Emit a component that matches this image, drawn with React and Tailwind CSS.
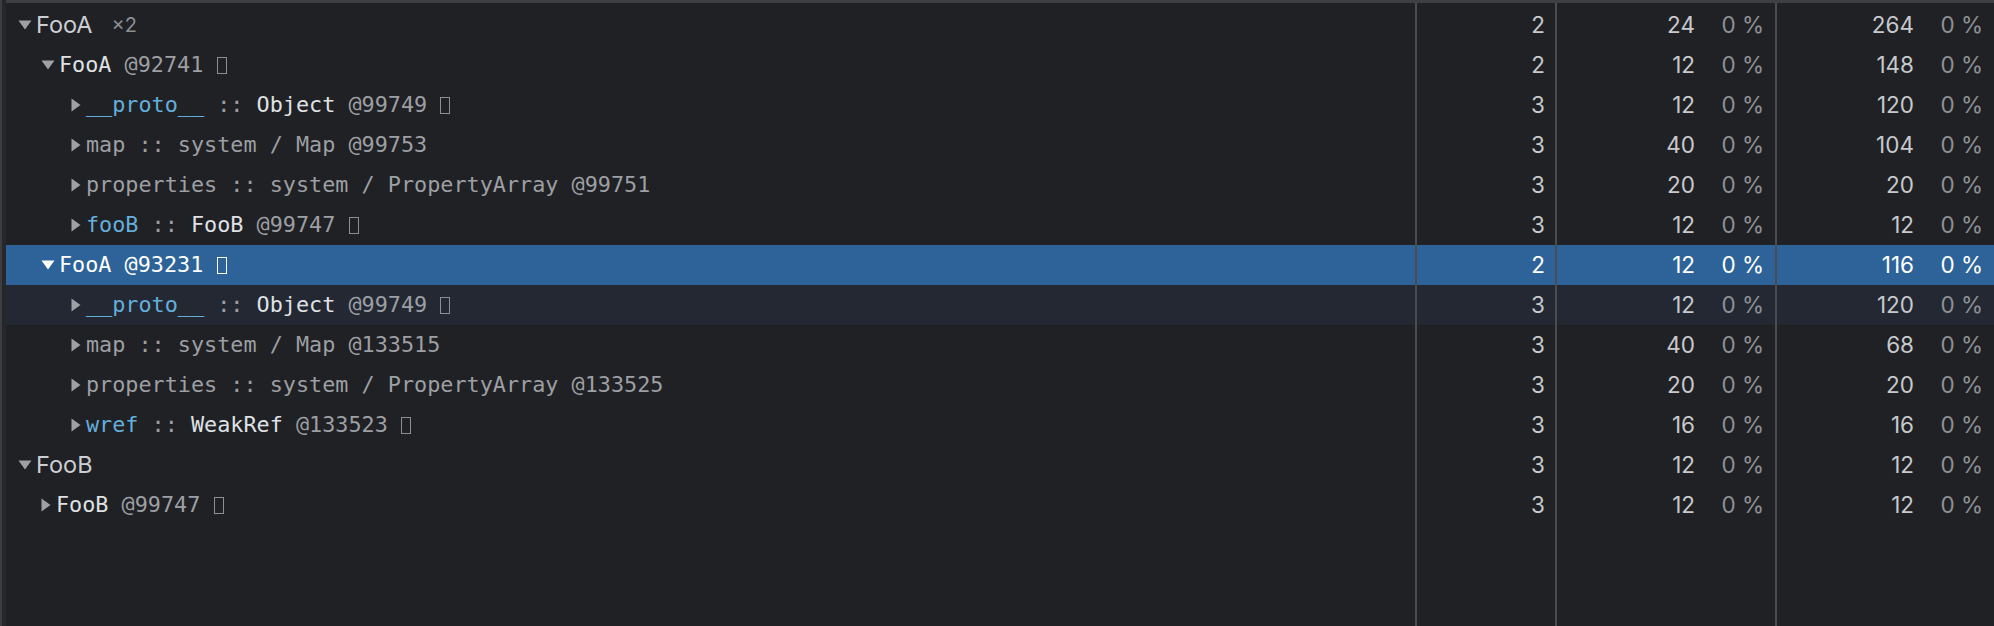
import React from "react";

const MONO = { fontFamily: '"DejaVu Sans Mono", "Liberation Mono", monospace' };

const rows = [
  { lvl: 0, open: true, cls: "FooA", mult: "×2", d: "2", s: "24", r: "264" },
  { lvl: 1, open: true, parts: [["FooA", "w"], [" @92741", "g"]], box: true, d: "2", s: "12", r: "148" },
  { lvl: 2, parts: [["__proto__", "b"], [" :: ", "g"], ["Object", "w"], [" @99749", "g"]], box: true, d: "3", s: "12", r: "120" },
  { lvl: 2, parts: [["map :: system / Map @99753", "g"]], d: "3", s: "40", r: "104" },
  { lvl: 2, parts: [["properties :: system / PropertyArray @99751", "g"]], d: "3", s: "20", r: "20" },
  { lvl: 2, parts: [["fooB", "b"], [" :: ", "g"], ["FooB", "w"], [" @99747", "g"]], box: true, d: "3", s: "12", r: "12" },
  { lvl: 1, open: true, selected: true, parts: [["FooA", "w"], [" @93231", "w"]], box: true, d: "2", s: "12", r: "116" },
  { lvl: 2, hover: true, parts: [["__proto__", "b"], [" :: ", "g"], ["Object", "w"], [" @99749", "g"]], box: true, d: "3", s: "12", r: "120" },
  { lvl: 2, parts: [["map :: system / Map @133515", "g"]], d: "3", s: "40", r: "68" },
  { lvl: 2, parts: [["properties :: system / PropertyArray @133525", "g"]], d: "3", s: "20", r: "20" },
  { lvl: 2, parts: [["wref", "b"], [" :: ", "g"], ["WeakRef", "w"], [" @133523", "g"]], box: true, d: "3", s: "16", r: "16" },
  { lvl: 0, open: true, cls: "FooB", d: "3", s: "12", r: "12" },
  { lvl: 1, parts: [["FooB", "w"], [" @99747", "g"]], box: true, d: "3", s: "12", r: "12" },
];

const indent = ["pl-[12px]", "pl-[35px]", "pl-[65px]"];

const partColor = {
  w: "text-[#dfe1e4]",
  g: "text-[#9c9fa3]",
  b: "text-[#64aedc]",
};

function Arrow({ open, color }) {
  if (open) {
    return (
      <svg width="14" height="10" viewBox="0 0 14 10" className="mr-[4px] shrink-0">
        <polygon points="0.5,0.5 13.5,0.5 7,9.5" fill={color} />
      </svg>
    );
  }
  return (
    <svg width="10" height="14" viewBox="0 0 10 14" className="mr-[5px] shrink-0">
      <polygon points="0.5,0.5 9.5,7 0.5,13.5" fill={color} />
    </svg>
  );
}

function Row({ row }) {
  const sel = row.selected;
  const bg = sel ? "bg-[#2d6398]" : row.hover ? "bg-[#242833]" : "";
  const num = sel ? "text-white" : "text-[#c6c9cd]";
  const pct = sel ? "text-white" : "text-[#8d9094]";
  return (
    <div className={`grid h-[40px] grid-cols-[1fr_140px_220px_219px] ${bg}`}>
      <div className={`flex items-center whitespace-pre ${indent[row.lvl]}`}>
        <Arrow open={row.open} color={sel ? "#ffffff" : "#9da0a4"} />
        {row.cls ? (
          <>
            <span className="font-['Inter'] text-[23.5px] text-[#cbced2]">{row.cls}</span>
            {row.mult && (
              <span className="ml-[19px] font-['Inter'] text-[20px] text-[#8b8e92]">{row.mult}</span>
            )}
          </>
        ) : (
          <span style={MONO} className="flex items-center text-[21.8px]">
            {row.parts.map(([t, c], i) => (
              <span key={i} className={sel ? "text-white" : partColor[c]}>
                {t}
              </span>
            ))}
            {row.box && (
              <>
                <span> </span>
                <span
                  className={`inline-block h-[17px] w-[10px] border-[1.5px] ${
                    sel ? "border-white" : "border-[#8c8f93]"
                  }`}
                />
              </>
            )}
          </span>
        )}
      </div>
      <div className={`flex items-center justify-end border-l-2 border-[#4b4c50] pr-[10px] font-['Inter'] text-[22.5px] ${num}`}>
        {row.d}
      </div>
      <div className="flex items-center justify-end border-l-2 border-[#4b4c50] pr-[11px] font-['Inter'] text-[22.5px]">
        <span className={num}>{row.s}</span>
        <span className={`w-[69px] text-right ${pct}`}>0 %</span>
      </div>
      <div className="flex items-center justify-end border-l-2 border-[#4b4c50] pr-[11px] font-['Inter'] text-[22.5px]">
        <span className={num}>{row.r}</span>
        <span className={`w-[69px] text-right ${pct}`}>0 %</span>
      </div>
    </div>
  );
}

export default function App() {
  return (
    <div className="flex h-[626px] w-[1994px] overflow-hidden bg-[#202124]">
      <div className="w-[6px] shrink-0 border-l-2 border-[#3c3d41] bg-[#26272a]" />
      <div className="flex flex-1 flex-col border-t-[3px] border-[#3e3f43]">
        <div className="grid h-[2px] grid-cols-[1fr_140px_220px_219px]">
          <div />
          <div className="border-l-2 border-[#4b4c50]" />
          <div className="border-l-2 border-[#4b4c50]" />
          <div className="border-l-2 border-[#4b4c50]" />
        </div>
        {rows.map((row, i) => (
          <Row key={i} row={row} />
        ))}
        <div className="grid flex-1 grid-cols-[1fr_140px_220px_219px]">
          <div />
          <div className="border-l-2 border-[#4b4c50]" />
          <div className="border-l-2 border-[#4b4c50]" />
          <div className="border-l-2 border-[#4b4c50]" />
        </div>
      </div>
    </div>
  );
}
